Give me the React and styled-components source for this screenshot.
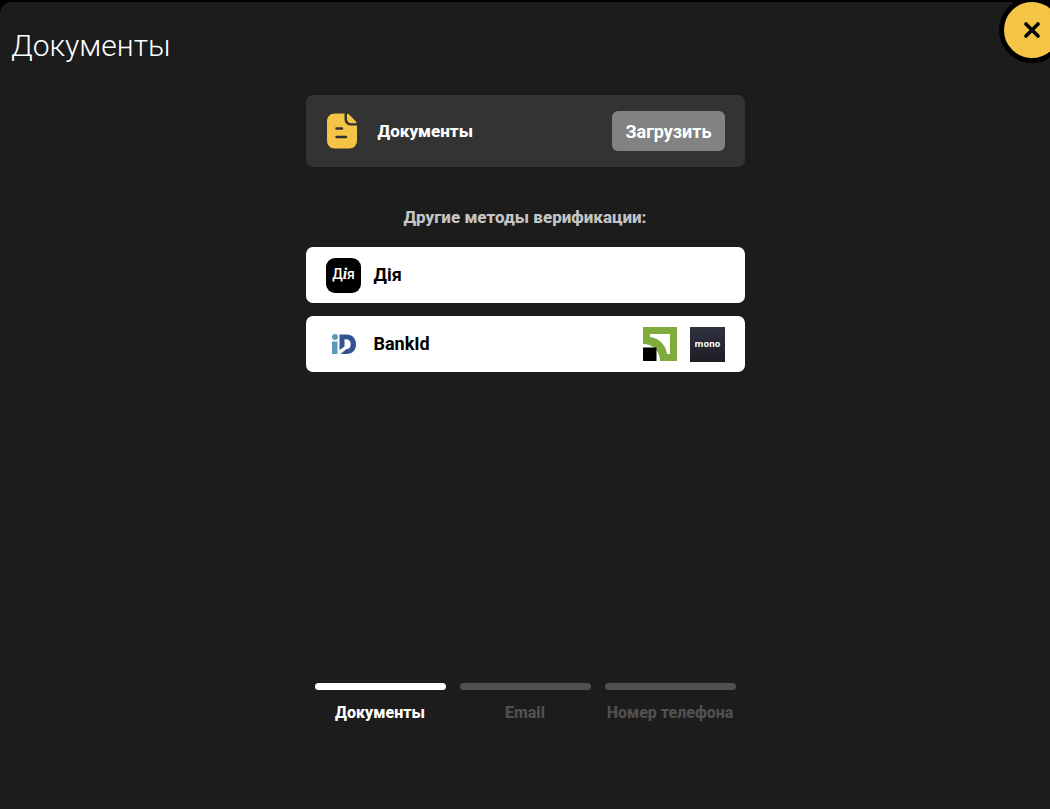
import React from 'react'
import styled, { createGlobalStyle } from 'styled-components'

const methods = [
    { name: 'Дія', icon: 'diia', banks: false },
    { name: 'BankId', icon: 'bankid', banks: true },
];

const steps = [
    { name: 'Документы', active: true },
    { name: 'Email', active: false },
    { name: 'Номер телефона', active: false },
];

const GlobalStyle = createGlobalStyle`
    * {
        box-sizing: border-box;
    }
    body {
        margin: 0;
        background-color: #000;
        font-family: Roboto, "Liberation Sans", sans-serif;
    }
`;

const Page = styled.div`
    position: relative;
    display: flex;
    min-height: 100vh;
    padding-top: 2px;
    overflow: hidden;
`;

const Panel = styled.main`
    display: flex;
    flex-direction: column;
    flex: 1;
    padding: 24px 11px 86px;
    border-top-left-radius: 12px;
    background-color: #1c1c1c;
    color: #fff;
`;

const CloseButton = styled.button`
    position: absolute;
    top: -3px;
    right: -15px;
    display: flex;
    align-items: center;
    justify-content: center;
    width: 66px;
    height: 66px;
    padding: 0;
    border: 5px solid #000;
    border-radius: 50%;
    background-color: #f4c444;
    cursor: pointer;
`;

const Title = styled.h1`
    margin: 0;
    font-size: 30px;
    font-weight: 300;
    line-height: 40px;
`;

const Content = styled.div`
    display: flex;
    flex-direction: column;
    width: 100%;
    max-width: 439px;
    margin: 29px auto 0;
`;

const UploadCard = styled.section`
    display: flex;
    align-items: center;
    padding: 16px 20px;
    border-radius: 7px;
    background-color: #333;
`;

const UploadName = styled.div`
    flex: 1;
    padding-left: 20px;
    font-size: 17px;
    font-weight: 800;
`;

const UploadButton = styled.button`
    height: 40px;
    padding: 0 13px;
    border: none;
    border-radius: 6px;
    background-color: #828282;
    color: #fff;
    font-family: inherit;
    font-size: 18px;
    font-weight: 700;
    cursor: pointer;
`;

const Subtitle = styled.h2`
    margin: 38px 0 18px;
    color: #c4c4c4;
    font-size: 17px;
    font-weight: 800;
    line-height: 24px;
    text-align: center;
`;

const MethodList = styled.div`
    display: flex;
    flex-direction: column;
    gap: 13px;
`;

const MethodButton = styled.button`
    display: flex;
    align-items: center;
    gap: 13px;
    width: 100%;
    height: 56px;
    padding: 0 20px;
    border: none;
    border-radius: 7px;
    background-color: #fff;
    color: #000;
    font-family: inherit;
    font-size: 18px;
    font-weight: 700;
    line-height: 20px;
    text-align: left;
    cursor: pointer;
`;

const MethodName = styled.span`
    flex: 1;
`;

const Steps = styled.ol`
    display: flex;
    gap: 14px;
    width: 100%;
    max-width: 421px;
    margin: auto auto 0;
    padding: 0;
    list-style: none;
`;

const Step = styled.li`
    flex: 1 1 0;
    min-width: 0;
    color: ${({ $active }) => ($active ? '#fff' : '#505050')};
    font-size: 16px;
    font-weight: 800;
    line-height: 20px;
    text-align: center;
    white-space: nowrap;
    &::before {
        content: '';
        display: block;
        height: 7px;
        margin-bottom: 13px;
        border-radius: 4px;
        background-color: currentColor;
    }
`;

const CloseIcon = () => (
    <svg width="16" height="16" viewBox="0 0 16 16" aria-hidden="true">
        <path d="M2 2L14 14M14 2L2 14" stroke="#000" strokeWidth="3.600" strokeLinecap="round" />
    </svg>
);

const DocumentIcon = () => (
    <svg width="32" height="36" viewBox="0 0 32 36" aria-hidden="true">
        <path d="M9 0.5H18.500V6C18.500 10 21 12.500 25 12.500H31V27C31 32.500 28 35.500 23 35.500H9C4 35.500 1 32.500 1 27V9C1 3.500 4 0.500 9 0.500Z" fill="#f4c444" />
        <path d="M21 2C21 0.800 22 0.500 22.800 1.300L30 8.600C30.800 9.400 30.500 10.300 29.500 10.300H25.500C22.700 10.300 21 8.600 21 6Z" fill="#f4c444" />
        <path d="M10.500 15.500H16M10.500 24H20" stroke="#333" strokeWidth="2.500" strokeLinecap="round" />
    </svg>
);

const DiiaIcon = () => (
    <svg width="35" height="35" viewBox="0 0 35 35" aria-hidden="true">
        <rect width="35" height="35" rx="9" fill="#000" />
        <text x="17.500" y="21" fill="#fff" fontSize="14" fontWeight="500" textAnchor="middle">
            Д<tspan fontFamily="Liberation Serif, serif" fontSize="16" fontStyle="italic" fontWeight="700">і</tspan>я
        </text>
    </svg>
);

const BankIdIcon = () => (
    <svg width="35" height="35" viewBox="0 0 35 35" aria-hidden="true">
        <circle cx="9" cy="10" r="3" fill="#5c9bb8" />
        <path d="M6 14.500H11.500V27H6Z" fill="#5c9bb8" />
        <path d="M13.500 7.500H20.500C26.500 7.500 30 11.500 30 17.200C30 23 26.500 27 20.500 27H14.500L20.500 22H21.500C23.800 21.500 24.700 19.500 24.700 17.200C24.700 14.500 23.300 12.300 20.500 12.300H18.500V19.500L13.500 23Z" fill="#31558f" />
    </svg>
);

const PrivatIcon = () => (
    <svg width="34" height="34" viewBox="0 0 34 34" aria-hidden="true">
        <path d="M0 0H34V34H17C17 24 10 17 0 17ZM7 7V10C16 11 23 18 24 27H27V7Z" fill="#7fab3c" fillRule="evenodd" />
        <path d="M0 20.500H13.500V34H0Z" fill="#000" />
    </svg>
);

const MonoIcon = () => (
    <svg width="35" height="35" viewBox="0 0 35 35" aria-hidden="true">
        <defs>
            <linearGradient id="mono" x1="0" y1="0" x2="0" y2="1">
                <stop offset="0" stopColor="#30323f" />
                <stop offset="1" stopColor="#1d1d25" />
            </linearGradient>
        </defs>
        <rect width="35" height="35" fill="url(#mono)" />
        <text x="17.500" y="20" fill="#fff" fontFamily="Open Sans, sans-serif" fontSize="9" fontWeight="700" textAnchor="middle">
            mono
        </text>
    </svg>
);

const App = () => {
    return (
        <>
            <GlobalStyle />
            <Page>
                <Panel>
                    <Title>Документы</Title>
                    <Content>
                        <UploadCard>
                            <DocumentIcon />
                            <UploadName>Документы</UploadName>
                            <UploadButton type="button">Загрузить</UploadButton>
                        </UploadCard>
                        <Subtitle>Другие методы верификации:</Subtitle>
                        <MethodList>
                            {methods.map((obj) => {
                                return (
                                    <MethodButton type="button" key={obj.name}>
                                        {obj.icon === 'diia' ? <DiiaIcon /> : <BankIdIcon />}
                                        <MethodName>{obj.name}</MethodName>
                                        {obj.banks && <PrivatIcon />}
                                        {obj.banks && <MonoIcon />}
                                    </MethodButton>
                                )
                            })}
                        </MethodList>
                    </Content>
                    <Steps>
                        {steps.map((obj) => {
                            return (
                                <Step key={obj.name} $active={obj.active}>{obj.name}</Step>
                            )
                        })}
                    </Steps>
                </Panel>
                <CloseButton type="button" aria-label="Закрыть">
                    <CloseIcon />
                </CloseButton>
            </Page>
        </>
    )
}

export default App
